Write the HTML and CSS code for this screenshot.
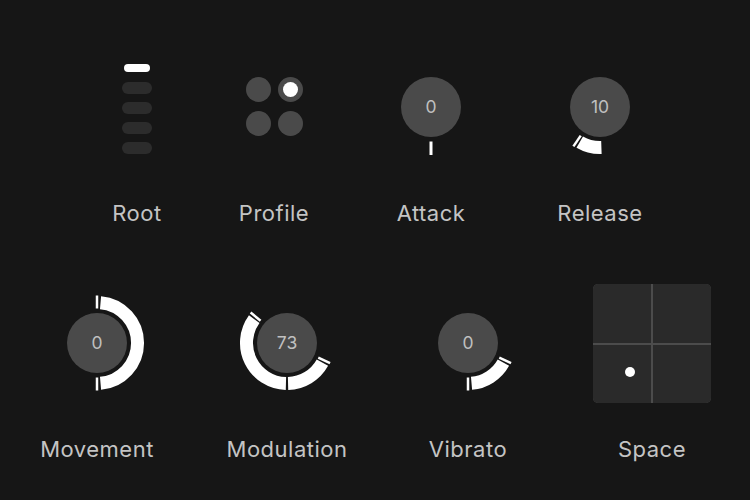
FILE: index.html
```html
<!DOCTYPE html>
<html lang="en">
<head>
<meta charset="utf-8">
<title>Synth controls</title>
<link rel="stylesheet" href="styles.css">
</head>
<body>
<main class="board">
  <section class="row">
    <div class="cell m-root">
      <div class="control">
        <div class="slots">
          <div class="slot active"><span class="pill"></span></div>
          <div class="slot"></div>
          <div class="slot"></div>
          <div class="slot"></div>
          <div class="slot"></div>
        </div>
      </div>
      <div class="label">Root</div>
    </div>
    <div class="cell m-profile">
      <div class="control">
        <div class="dots">
          <span class="dot"></span>
          <span class="dot selected"><span class="core"></span></span>
          <span class="dot"></span>
          <span class="dot"></span>
        </div>
      </div>
      <div class="label">Profile</div>
    </div>
    <div class="cell m-attack">
      <div class="control">
        <svg class="knob" viewBox="0 0 100 100" width="100" height="100">
          <circle class="face" cx="50" cy="50" r="30"/>
          <text class="value" x="50" y="56.4">0</text>
          <line class="tick thick" x1="50" y1="84.5" x2="50" y2="98"/>
        </svg>
      </div>
      <div class="label">Attack</div>
    </div>
    <div class="cell m-release">
      <div class="control">
        <svg class="knob" viewBox="0 0 100 100" width="100" height="100">
          <circle class="face" cx="50" cy="50" r="30"/>
          <text class="value" x="50" y="56.4">10</text>
          <path class="arc" d="M51.41 90.48 A40.5 40.5 0 0 1 29.75 85.07"/>
          <line class="tick" x1="30.71" y1="78.60" x2="23.44" y2="89.38"/>
        </svg>
      </div>
      <div class="label">Release</div>
    </div>
  </section>

  <section class="row">
    <div class="cell m-movement">
      <div class="control">
        <svg class="knob" viewBox="0 0 100 100" width="100" height="100">
          <circle class="face" cx="50" cy="50" r="30"/>
          <text class="value" x="50" y="56.4">0</text>
          <path class="arc" d="M53.53 9.65 A40.5 40.5 0 0 1 53.53 90.35"/>
          <line class="tick" x1="50" y1="15.5" x2="50" y2="2.5"/>
          <line class="tick" x1="50" y1="84.5" x2="50" y2="97.5"/>
        </svg>
      </div>
      <div class="label">Movement</div>
    </div>
    <div class="cell m-modulation">
      <div class="control">
        <svg class="knob" viewBox="0 0 100 100" width="100" height="100">
          <circle class="face" cx="50" cy="50" r="30"/>
          <text class="value" x="50" y="56.4">73</text>
          <path class="arc" d="M48.94 90.49 A40.5 40.5 0 0 1 17.23 26.19"/>
          <path class="arc" d="M85.42 69.64 A40.5 40.5 0 0 1 51.06 90.49"/>
          <line class="tick" x1="23.57" y1="27.82" x2="13.61" y2="19.47"/>
          <line class="tick" x1="81.27" y1="64.58" x2="93.05" y2="70.07"/>
        </svg>
      </div>
      <div class="label">Modulation</div>
    </div>
    <div class="cell m-vibrato">
      <div class="control">
        <svg class="knob" viewBox="0 0 100 100" width="100" height="100">
          <circle class="face" cx="50" cy="50" r="30"/>
          <text class="value" x="50" y="56.4">0</text>
          <path class="arc" d="M85.42 69.64 A40.5 40.5 0 0 1 53.53 90.35"/>
          <line class="tick" x1="81.27" y1="64.58" x2="93.05" y2="70.07"/>
          <line class="tick" x1="50" y1="84.5" x2="50" y2="97.5"/>
        </svg>
      </div>
      <div class="label">Vibrato</div>
    </div>
    <div class="cell m-space">
      <div class="control">
        <div class="pad">
          <span class="quad q1"></span>
          <span class="quad q2"></span>
          <span class="quad q3"></span>
          <span class="quad q4"></span>
          <span class="puck"></span>
        </div>
      </div>
      <div class="label">Space</div>
    </div>
  </section>
</main>
</body>
</html>
```

FILE: styles.css
```css
* { box-sizing: border-box; }

html, body {
  margin: 0;
  padding: 0;
  background: #161616;
}

body {
  width: 750px;
  height: 500px;
  overflow: hidden;
  font-family: Inter, "Liberation Sans", sans-serif;
}

.board {
  padding-top: 47px;
  display: flex;
  flex-direction: column;
  gap: 58px;
}

.row {
  display: flex;
}

.cell {
  width: 120px;
  flex: none;
  display: flex;
  flex-direction: column;
  align-items: center;
}

.m-root { margin-left: 77px; }
.m-profile { margin-left: 17px; }
.m-attack { margin-left: 37px; }
.m-release { margin-left: 49px; }
.m-movement { margin-left: 37px; }
.m-modulation { margin-left: 70px; }
.m-vibrato { margin-left: 61px; }
.m-space { margin-left: 64px; }

.control {
  width: 120px;
  height: 120px;
  display: flex;
  align-items: center;
  justify-content: center;
}

.label {
  margin-top: 34px;
  font-size: 22px;
  line-height: 24px;
  color: #c4c4c4;
  white-space: nowrap;
  letter-spacing: 0.5px;
}

/* Root selector */
.slots {
  display: flex;
  flex-direction: column;
  gap: 8px;
  margin-top: 2px;
}
.slot {
  width: 30px;
  height: 12px;
  border-radius: 6px;
  background: #2c2c2c;
}
.slot.active {
  background: transparent;
  display: flex;
  align-items: center;
  justify-content: center;
}
.pill {
  width: 26px;
  height: 8px;
  border-radius: 4px;
  background: #ffffff;
}

/* Profile dots */
.dots {
  display: grid;
  grid-template-columns: 25px 25px;
  column-gap: 7px;
  row-gap: 9px;
  margin-top: -2px;
  margin-left: 1px;
}
.dot {
  width: 25px;
  height: 25px;
  border-radius: 50%;
  background: #4a4a4a;
  display: flex;
  align-items: center;
  justify-content: center;
}
.core {
  width: 15px;
  height: 15px;
  border-radius: 50%;
  background: #ffffff;
}

/* Knobs */
.knob {
  display: block;
  overflow: visible;
}
.face {
  fill: #4a4a4a;
}
.value {
  font-family: Inter, "Liberation Sans", sans-serif;
  font-size: 17.5px;
  fill: #c0c0c0;
  text-anchor: middle;
}
.arc {
  fill: none;
  stroke: #ffffff;
  stroke-width: 13;
}
.tick {
  stroke: #ffffff;
  stroke-width: 2.5;
}
.tick.thick {
  stroke-width: 3;
}

/* XY pad */
.pad {
  position: relative;
  width: 118px;
  height: 119px;
  border-radius: 5px;
  background: #4c4c4c;
  display: grid;
  grid-template-columns: 58px 58px;
  grid-template-rows: 59px 58px;
  gap: 2px;
  overflow: hidden;
}
.quad {
  background: #2a2a2a;
}
.puck {
  position: absolute;
  left: 32px;
  top: 83px;
  width: 10px;
  height: 10px;
  border-radius: 50%;
  background: #ffffff;
}
```
